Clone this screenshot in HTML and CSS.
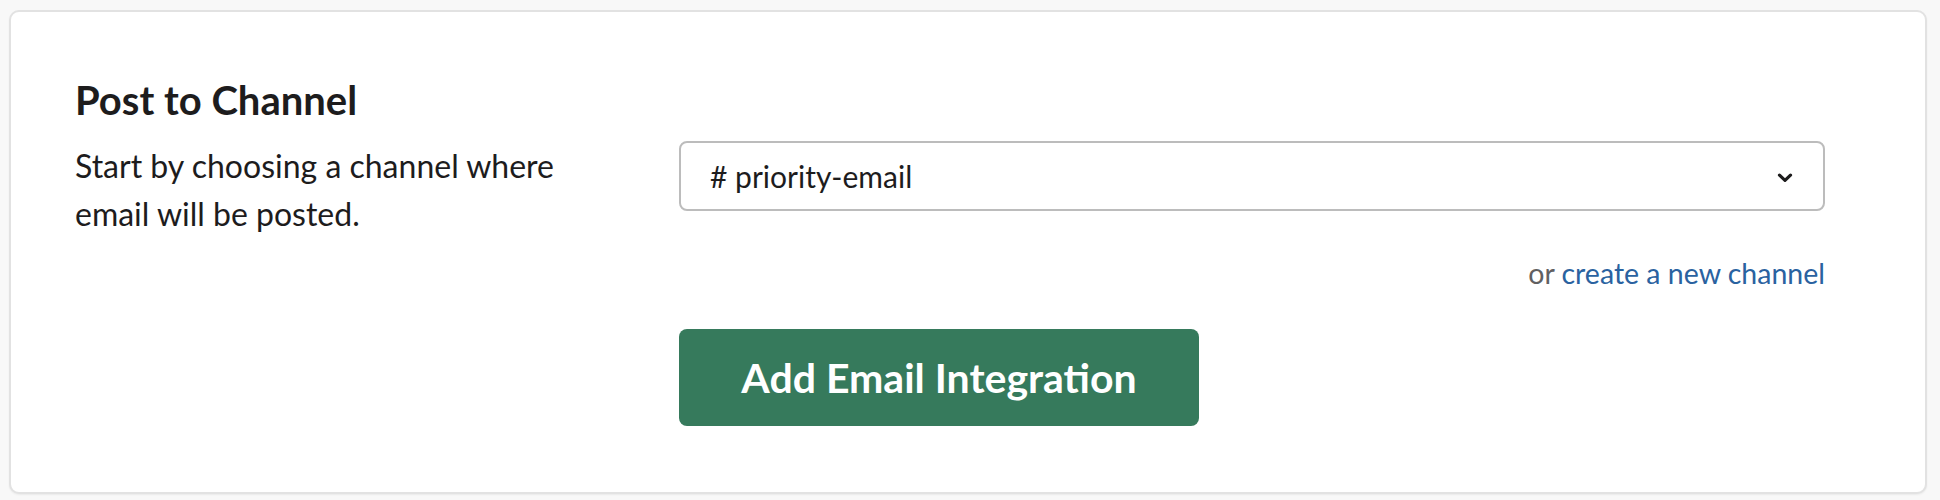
FILE: index.html
```html
<!DOCTYPE html>
<html lang="en">
<head>
<meta charset="utf-8">
<title>Post to Channel</title>
<link rel="stylesheet" href="styles.css">
</head>
<body>
  <section class="card">
    <h2 class="card-title">Post to Channel</h2>
    <div class="card-row">
      <p class="card-desc">Start by choosing a channel where email will be posted.</p>
      <div class="card-form">
        <div class="select">
          <span class="select-value"># priority-email</span>
          <svg class="select-chevron" viewBox="0 0 16 10" width="16" height="10" aria-hidden="true">
            <path d="M2.5 2.2 L8 7.4 L13.5 2.2" fill="none" stroke="#1d1c1d" stroke-width="3.2" stroke-linecap="round" stroke-linejoin="round"/>
          </svg>
        </div>
        <p class="alt-link">or <a href="#">create a new channel</a></p>
        <button class="btn-primary" type="button">Add Email Integration</button>
      </div>
    </div>
  </section>
</body>
</html>
```

FILE: styles.css
```css
* {
  box-sizing: border-box;
}

html, body {
  margin: 0;
  padding: 0;
}

body {
  background: #f8f8f8;
  font-family: Lato, "Noto Sans", "Liberation Sans", sans-serif;
  color: #1d1c1d;
  padding: 10px 13px 6px 9px;
}

.card {
  background: #ffffff;
  border: 2px solid #e2e2e2;
  border-radius: 10px;
  box-shadow: 0 1px 2px rgba(0, 0, 0, 0.06);
  padding: 65px 100px 60px 64px;
  height: 484px;
}

.card-title {
  margin: 0;
  font-size: 40px;
  font-weight: 700;
  line-height: 46px;
  color: #1d1c1d;
}

.card-row {
  display: flex;
  align-items: flex-start;
  margin-top: 18px;
}

.card-desc {
  margin: 0;
  padding-top: 1px;
  padding-right: 60px;
  flex: 0 0 604px;
  font-size: 32px;
  line-height: 48px;
}

.card-form {
  flex: 1 1 auto;
  display: flex;
  flex-direction: column;
  align-items: flex-start;
}

.select {
  width: 100%;
  height: 70px;
  border: 2px solid #bcbcbc;
  border-radius: 8px;
  display: flex;
  align-items: center;
  justify-content: space-between;
  padding: 0 30px 0 29px;
}

.select-value {
  font-size: 30px;
  line-height: 45px;
  color: #1d1c1d;
}

.select-chevron {
  display: block;
  margin-top: 4px;
}

.alt-link {
  align-self: flex-end;
  margin: 41px 0 0 0;
  font-size: 28.5px;
  line-height: 42px;
  color: #616061;
}

.alt-link a {
  color: #2a62a0;
  text-decoration: none;
}

.btn-primary {
  margin-top: 35px;
  width: 520px;
  height: 97px;
  border: none;
  border-radius: 8px;
  background: #367a5c;
  color: #ffffff;
  font-family: Lato, "Noto Sans", "Liberation Sans", sans-serif;
  font-size: 41px;
  font-weight: 700;
  line-height: 1;
  padding: 0;
}
```
